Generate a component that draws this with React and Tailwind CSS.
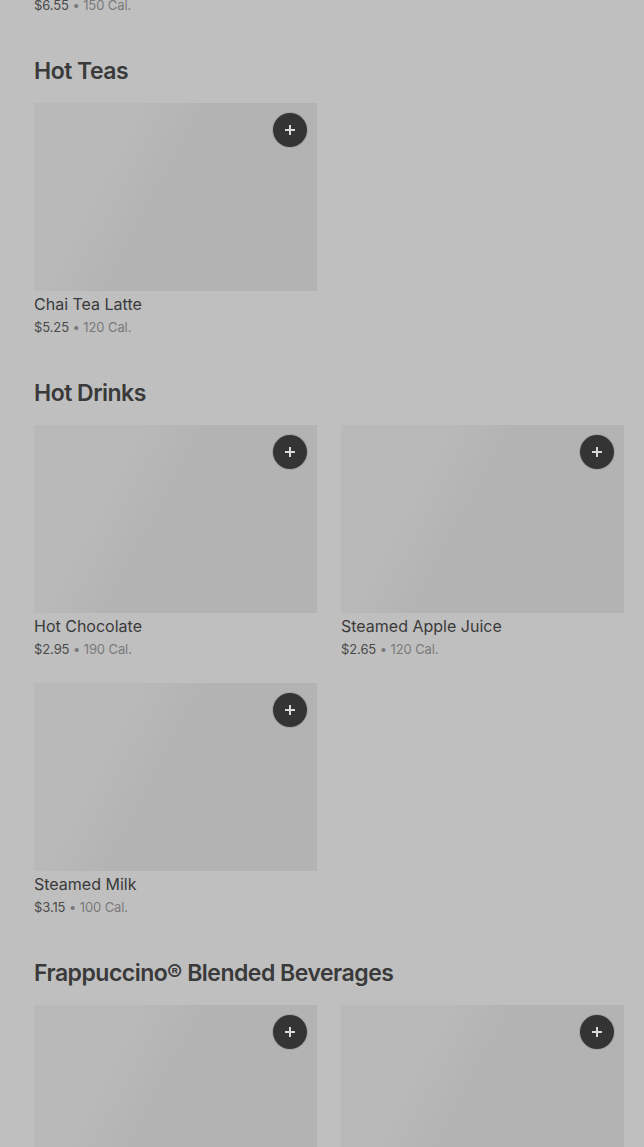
import React from "react";

const sections = [
  {
    title: "Hot Teas",
    items: [{ name: "Chai Tea Latte", price: "$5.25", cal: "120 Cal." }],
  },
  {
    title: "Hot Drinks",
    items: [
      { name: "Hot Chocolate", price: "$2.95", cal: "190 Cal." },
      { name: "Steamed Apple Juice", price: "$2.65", cal: "120 Cal." },
      { name: "Steamed Milk", price: "$3.15", cal: "100 Cal." },
    ],
  },
  {
    title: "Frappuccino® Blended Beverages",
    items: [
      { name: "Caramel Frappuccino", price: "$5.45", cal: "380 Cal." },
      { name: "Mocha Frappuccino", price: "$5.45", cal: "370 Cal." },
    ],
  },
];

function PlusButton() {
  return (
    <button className="absolute top-[9px] right-[9px] w-9 h-9 rounded-full bg-[#343434] border border-[#d0d0d0]/70 flex items-center justify-center">
      <svg width="14" height="14" viewBox="0 0 14 14" fill="none">
        <path d="M7 2v10M2 7h10" stroke="#d9d9d9" strokeWidth="2" />
      </svg>
    </button>
  );
}

function Price({ price, cal }) {
  return (
    <p className="text-[13px] leading-5 tracking-[-0.1px]">
      <span className="text-[#4a4a4a]">{price}</span>
      <span className="text-[#7a7a7a]"> • {cal}</span>
    </p>
  );
}

function ProductCard({ item }) {
  return (
    <div className="flex flex-col">
      <div className="relative h-[188px] bg-[linear-gradient(118deg,#b9b9b9_0%,#b9b9b9_28%,#b3b3b3_46%,#b3b3b3_100%)]">
        <PlusButton />
      </div>
      <p className="mt-[2px] text-[16px] leading-[22px] text-[#3a3a3a]">
        {item.name}
      </p>
      <div className="mt-[2px]">
        <Price price={item.price} cal={item.cal} />
      </div>
    </div>
  );
}

export default function App() {
  return (
    <div
      className="h-[1147px] overflow-hidden bg-[#bfbfbf] pl-[34px] pr-5"
      style={{ fontFamily: "Inter, 'Noto Sans', sans-serif" }}
    >
      <div className="-mt-[5px]">
        <Price price="$6.55" cal="150 Cal." />
      </div>

      {sections.map((section) => (
        <section key={section.title} className="mt-[40px]">
          <h2 className="text-[23px] leading-8 font-semibold tracking-[-0.5px] text-[#3a3a3a]">
            {section.title}
          </h2>
          <div className="mt-4 grid grid-cols-2 gap-x-6 gap-y-6">
            {section.items.map((item) => (
              <ProductCard key={item.name} item={item} />
            ))}
          </div>
        </section>
      ))}
    </div>
  );
}
